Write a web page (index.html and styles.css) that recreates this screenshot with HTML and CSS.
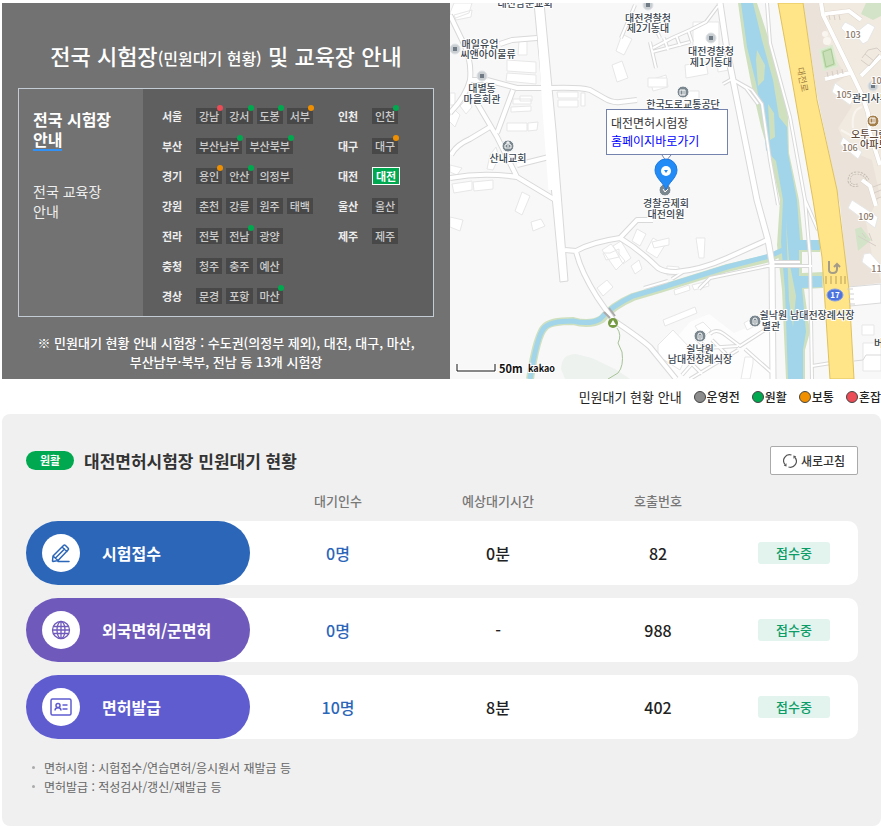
FILE: index.html
```html
<!DOCTYPE html>
<html lang="ko">
<head>
<meta charset="utf-8">
<meta name="viewport" content="width=device-width, initial-scale=1">
<title>전국 시험장 및 교육장 안내</title>
<link rel="stylesheet" href="styles.css">
</head>
<body>
<main class="page">
  <section class="hero">
    <div class="guide">
      <h1 class="guide-title">전국 시험장<small>(민원대기 현황)</small> 및 교육장 안내</h1>
      <div class="guide-box">
        <nav class="tabs">
          <a class="tab tab-on" href="#">전국 시험장<br><span class="underlined">안내</span></a>
          <a class="tab" href="#">전국 교육장<br>안내</a>
        </nav>
        <div class="regions">
          <ul class="region-list">
            <li><b>서울</b><a class="chip busy" href="#">강남</a><a class="chip good" href="#">강서</a><a class="chip good" href="#">도봉</a><a class="chip normal" href="#">서부</a></li>
            <li><b>부산</b><a class="chip good" href="#">부산남부</a><a class="chip good" href="#">부산북부</a></li>
            <li><b>경기</b><a class="chip normal" href="#">용인</a><a class="chip good" href="#">안산</a><a class="chip" href="#">의정부</a></li>
            <li><b>강원</b><a class="chip" href="#">춘천</a><a class="chip" href="#">강릉</a><a class="chip" href="#">원주</a><a class="chip" href="#">태백</a></li>
            <li><b>전라</b><a class="chip" href="#">전북</a><a class="chip good" href="#">전남</a><a class="chip" href="#">광양</a></li>
            <li><b>충청</b><a class="chip" href="#">청주</a><a class="chip" href="#">충주</a><a class="chip" href="#">예산</a></li>
            <li><b>경상</b><a class="chip" href="#">문경</a><a class="chip" href="#">포항</a><a class="chip good" href="#">마산</a></li>
          </ul>
          <ul class="region-list">
            <li><b>인천</b><a class="chip good" href="#">인천</a></li>
            <li><b>대구</b><a class="chip normal" href="#">대구</a></li>
            <li><b>대전</b><a class="chip chip-on" href="#">대전</a></li>
            <li><b>울산</b><a class="chip" href="#">울산</a></li>
            <li><b>제주</b><a class="chip" href="#">제주</a></li>
          </ul>
        </div>
      </div>
      <p class="guide-note">※ 민원대기 현황 안내 시험장 : 수도권(의정부 제외), 대전, 대구, 마산,<br>부산남부·북부, 전남 등 13개 시험장</p>
    </div>

    <div class="map">
      <svg class="map-art" viewBox="450 3 431 376" preserveAspectRatio="xMinYMin slice">
        <defs>
          <g id="roads-s">
            <path d="M487 80 517 88H550Q580 87 590 90L604 98Q612 103 620 102L637 100"/>
            <path d="M450 15 463 42Q472 60 470 80 466 96 450 113"/>
            <path d="M477 103 497 137 517 177 557 201M513 90 497 133M490 127 470 139Q456 145 451 155M450 178Q483 172 517 177M517 165 549 157M500 44 512 40 537 38M470 80H487"/>
            <path d="M565 250 576 251Q592 242 620 238 640 250 658 268 664 272 676 272M576 251Q580 270 597 297L613 320Q640 338 650 347L676 379"/>
            <path d="M620 238 637 220H653M676 272Q700 270 727 258L767 240"/>
          </g>
          <g id="roads-xs">
            <path d="M635 5 621 38M650 42 656 68M653 48 672 38 690 30 706 22 718 6M652 52 690 42M664 38 668 50M676 35 680 46M688 30 692 42M723 84 732 79 746 88 758 104M660 38 650 15"/>
            <path d="M683 272 672 279M699 289 710 278 772 265M644 288 668 281M682 375 706 348 738 346M690 362 702 374M706 348 696 338M710 334Q716 328 724 334L740 346 771 326M712 340 726 354M745 349 771 372M690 379 738 350M812 366 831 363M768 266 812 266"/>
            <path d="M767 3 770 43 790 117 805 200 810 257 812 379M734 80 752 90 762 104 770 160 778 205M805 200 818 230M772 262H800"/>
          </g>
        </defs>
        <rect x="450" y="3" width="431" height="376" fill="#f8f8f8"/>
        <path d="M561 369Q561 354 576 354L592 358 615 369 630 379H565Z" fill="#edf2ef"/>
        <path d="M690 322 709 314 734 333 770 318V379H672L664 352Z" fill="#fdfdfd"/>

        <g class="block">
          <path d="M454 3h18l-3 10-16 6-3-6zM454 15l18-5-1 7-15 3zM519 41h8v14h-9zM507 60l29 2v11l-29-2zM507 73l29 2v9l-30-3zM520 96h12v5h-12zM513 99h18v5h-18zM511 107l20-1v5l-20 1zM507 123h20v8h-20zM528 123l10-1-1 8-9 1zM557 92h21v6h-20zM558 100h20v7h-20zM581 93h4v13h-4z"/>
          <path d="M622 34l10 5-8 16-8-4zM612 65l10-4 6 17-11 4zM650 80l16-5 2 12-15 4zM453 108l7 7-5 12-7-7zM460 106l8-8 4 9-6 7zM490 155l6-8 3 10-6 13-6-1zM450 165l12 3-5 7-7-3zM452 184l20-3v9l-18 3zM473 182l20-2v9l-19 2zM522 192l8 4-8 19-7-4zM531 222l10-3 4 7-12 5zM450 217l13 3-3 11-10-4z"/>
          <path d="M603 253h7l9-4v8l-13 3zM602 250l9-6 14 17-9 9zM613 246l8-5 10 17-8 6zM637 229l9 5-6 12-8-5zM653 238l12 7-8 13-11-7zM631 266l8-6 3 9-7 5zM597 288l10-8 6 7-10 9zM663 320l32-13 2 6-32 13zM658 345l15-15 17 18-10 22-22-14zM695 326l8-4 8 8-8 8zM744 323l10-6 5 7-12 6z"/>
          <path d="M693 22h26v26h-26zM685 65l21-3 2 12-22 4zM717 56h12v14l-11 2zM685 91h14v10h-13zM696 238h9l-1 20h-5zM667 266l12 1v8h-12zM652 242l17-4v7l-15 3zM745 357h8v6l-3 16h-9zM862 325h12v10h-12zM863 343h18v28h-18zM450 93h5v12h-5zM648 78h19v9h-19zM674 290l15-5 1 5-15 5zM692 285l16-4 1 5-15 4z"/>
        </g>

        <path d="M803 3H881V283L848 287 840 205 817 95Z" fill="#ebe3d9"/>
        <path d="M824 3H881V280L872 256 866 222 880 196 872 160 848 150 838 128 852 106 834 84 846 76 828 46Z" fill="#f1eae0"/>
        <path d="M866 3 861 14 873 20 881 16V3Z" fill="#d3e3c7"/>
        <path d="M855 229 861 227 871 240 858 251Z" fill="#d3e3c7"/>
        <path d="M820 50 832 46 837 66 824 70Z" fill="#c8dfb8" stroke="#dcebd2" stroke-width="2"/>
        <path d="M823 52 831 49 834 64 826 67Z" fill="none" stroke="#a9cb95"/>

        <g fill="none" class="lane-case"><path d="M821 3 823 15 850 70 862 95 868 113 870 133 880 165M825 14 849 11 861 20M861 76 881 56M825 79 850 73M862 180 870 186 876 206"/></g>
        <g fill="none" class="lane"><path d="M821 3 823 15 850 70 862 95 868 113 870 133 880 165M825 14 849 11 861 20M861 76 881 56M825 79 850 73M862 180 870 186 876 206"/></g>
        <path d="M827 72 828 77M832 71 833 76M837 70 838 75M842 69 843 74M829 15 830 20M834 15 835 20M839 15 840 20M862 58l6-8 9-2 4 4M861 60 869 66 879 54M865 54l9 7M873 187l8-3M874 193l7-3M876 199l5-2M858 236 876 246M862 233l4 5M869 233l3 8" fill="none" stroke="#d7cfc7"/>
        <circle cx="825" cy="34" r="3" fill="#f9f5ef"/><circle cx="827" cy="41" r="4" fill="#f9f5ef"/>
        <g class="block">
          <path d="M841 28l4-6 8 4 5 5 10-8 7 4-7 14-5 3-5-6-5 2zM835 83l20 14-5 8-18-13zM843 137l19 15-4 7-18-15zM852 200l26 17-3 11-27-20zM864 254l6-1 11 12v8h-5l-14-11z"/>
        </g>
        <path d="M858 185Q851 187 849 181 849 173 857 173 864 173 868 180" fill="none" stroke="#c7bfb7" stroke-width="3" stroke-dasharray="2 1"/>
        <path d="M858 185Q851 187 849 181 849 173 857 173 864 173 868 180" fill="none" stroke="#f3ece2"/>
        <path d="M853 128Q851 110 862 107M841 130 852 136" fill="none" stroke="#f9f4ed" stroke-width="2"/>

        <path class="bank" d="M738 3H757L770 43 782 83 788 117 789 153 799 200 803 240 820 242V252H802V273L823 272V288L804 289 810 332 805 350V379H786L782 290 777 245 780 200 771 161 761 127 751 83 744 47Z"/>
        <path class="bank-line" d="M785 250 770 258 727 268 660 289 633 297Q612 306 602 319 590 326 573 321 550 321 545 327 537 334 530 379"/>
        <path class="water" d="M741 3H753L762 40 773 80 779 117 787 127 788 153 797 200 800 240H820V250H799V276H822V287L802 288 806 332 803 350V379H788L785 290 781 242 783 200 776 161 766 150 764 127 756 83 747 47Z"/>
        <path class="water-line" d="M785 249 770 256 727 267 660 288 633 296Q612 306 600 319 590 325 573 321 550 321 544 328 537 336 530 379"/>
        <path d="M757 50 765 65 764 80 758 86 756 60ZM768 104 774 113 775 137 770 140ZM786 220 789 260 796 296 793 327 789 300Z" fill="#cfe0bf"/>

        <use href="#roads-xs" class="xs-case"/>
        <use href="#roads-s" class="s-case"/>
        <path class="m-case" d="M720 3 727 50 733 80 757 200 768 240 772 263 773 379"/>
        <path d="M534 3 544 110 560 282 568 281 556 130 544 3Z" fill="#fff" stroke="#d9d9d9"/>
        <use href="#roads-xs" class="xs-fill"/>
        <use href="#roads-s" class="s-fill"/>
        <path class="m-fill" d="M720 3 727 50 733 80 757 200 768 240 772 263 773 379"/>
        <path d="M541 30 546 110 552 190" fill="none" stroke="#fff" stroke-width="7"/>

        <path d="M848 287 881 284V303L850 306Z" fill="#fff" stroke="#d9d9d9"/>
        <path d="M854 361 863 360 866 355H881" fill="none" stroke="#d9d9d9"/>
        <path d="M778 3H803L817 100 837 190 843 240 849 290 854 379H830L822 257 813 200 792 80Z" fill="#ffe588" stroke="#dfc25f"/>
        <path d="M826 276v8M831 276v8M836 276v8M841 276v8M845 276v8" stroke="#dcc171" stroke-width="2"/>
        <path d="M847 289h6M848 294h6M848 299h6M849 304h6" stroke="#d0d0d0"/>
        <path d="M829 261v9q0 3 4 3 4 0 4-4v-5m-3 3 3-3 3 3" fill="none" stroke="#a49c87" stroke-width="2"/>
        <path d="M617 328Q622 335 618 343L622 352Q624 366 618 373L608 379" fill="none" stroke="#a7c398"/>
        <path d="M604 312 610 318M609 308 615 316" stroke="#aaa" stroke-width="2"/>

        <g class="dot"><circle cx="455" cy="49" r="5"/><circle cx="482" cy="76" r="5"/><circle cx="648" cy="5" r="5"/><circle cx="711" cy="38" r="5"/><circle cx="873" cy="86" r="5"/></g>
        <path d="M453 47h4v4h-4zM480 74h4v4h-4zM646 3h4v4h-4zM709 36h4v4h-4zM871 84h4v4h-4z" fill="#6f7a84"/>
        <g fill="#7b878f" stroke="#fff" stroke-width="1"><circle cx="508" cy="146" r="6"/><circle cx="683" cy="92" r="6"/><circle cx="665" cy="190" r="6"/><circle cx="755" cy="321" r="6"/><circle cx="700" cy="336" r="6"/></g>
        <path d="M505 148v-3l2-1v-2h2v2l2 1v3zM680 90h5v5h-5zM753 324v-4q0-2 2-2t2 2v4zM698 339v-4q0-2 2-2t2 2v4z" fill="none" stroke="#fff"/>
        <path d="M508 142v5M683 90v5M755 320v3M700 335v3M663 189l2 3 3-3" fill="none" stroke="#fff"/>
        <circle cx="873" cy="121" r="6" fill="#a47f4c" stroke="#fff"/><path d="M870 118h5v5h-5zM873 118v5" fill="none" stroke="#fff"/>
        <circle cx="613" cy="323" r="5" fill="#769a42"/><path d="M613 320 616 325H610Z" fill="#fff"/>

        <g class="place number"><text x="853" y="38">103</text><text x="879" y="84">104</text><text x="844" y="98">105</text><text x="850" y="151">106</text><text x="866" y="220">109</text><text x="879" y="272">110</text></g>
        <g class="place">
          <text x="525" y="7">대전남문교회</text>
          <text><tspan x="648" y="22">대전경찰청</tspan><tspan x="648" y="32">제2기동대</tspan></text>
          <text><tspan x="480" y="48">매일유업</tspan><tspan x="488" y="58">씨앤아이물류</tspan></text>
          <text><tspan x="482" y="92">대별동</tspan><tspan x="482" y="103">마을회관</tspan></text>
          <text><tspan x="711" y="55">대전경찰청</tspan><tspan x="711" y="66">제1기동대</tspan></text>
          <text x="683" y="108">한국도로교통공단</text>
          <text x="508" y="162">산내교회</text>
          <text><tspan x="666" y="207">경찰공제회</tspan><tspan x="666" y="218">대전의원</tspan></text>
          <text><tspan x="807" y="319">쉴낙원 남대전장례식장</tspan><tspan x="771" y="330">별관</tspan></text>
          <text><tspan x="700" y="353">쉴낙원</tspan><tspan x="700" y="363">남대전장례식장</tspan></text>
          <text class="at-left" x="852" y="102">관리사무소</text><text class="at-left" x="874" y="347">버스</text>
        </g>
        <g class="place brown"><text class="at-left"><tspan x="851" y="138">오투그란데</tspan><tspan x="860" y="148">아파트</tspan></text></g>
        <text class="road-name" transform="translate(797 68) rotate(79)">대전로</text>
        <ellipse cx="835" cy="295" rx="8" ry="6" fill="#4d73df" stroke="#87a0e8"/><text class="route" x="835" y="298">17</text>
        <path d="M662 155 666 161 671 155" fill="#fff" stroke="#7383ad"/>
        <path d="M666 190C664 183 655 178 655 170A11 11 0 0 1 677 170C677 178 668 183 666 190Z" fill="#238bf5" stroke="#1c78e0"/>
        <circle cx="666" cy="171" r="5" fill="#fff"/><path d="M664 170h4l-2 3z" fill="#238bf5"/>
        <path d="M457 364V371H495V364" fill="none" stroke="#fff" stroke-width="3"/><path d="M457 364V371H495V364" fill="none" stroke="#111"/>
        <text class="scale" x="499" y="373">50m</text><text class="brand" x="528" y="372">kakao</text>
      </svg>
      <div class="bubble">대전면허시험장<br><a href="#">홈페이지바로가기</a></div>
    </div>
  </section>

  <div class="legend">
    <span class="legend-title">민원대기 현황 안내</span>
    <span class="key"><i class="key-dot idle"></i>운영전</span>
    <span class="key"><i class="key-dot good"></i>원활</span>
    <span class="key"><i class="key-dot normal"></i>보통</span>
    <span class="key"><i class="key-dot busy"></i>혼잡</span>
  </div>

  <section class="status">
    <header class="status-head">
      <span class="pill">원활</span>
      <h2>대전면허시험장 민원대기 현황</h2>
      <button class="refresh" type="button">
        <svg width="14" height="14" viewBox="0 0 14 14" fill="none" stroke="#555" stroke-width="1.2"><path d="M8.500 1A6 6 0 0 0 2 10.500M5.500 13A6 6 0 0 0 12 3.500"/><path d="M0.800 11.800 3.500 12.500 3.500 9.300ZM13.200 2.200 10.400 1.500 10.500 4.700Z" fill="#555" stroke="none"/></svg>
        새로고침
      </button>
    </header>
    <table class="queue">
      <thead>
        <tr><th class="col-name"></th><th class="col-num">대기인수</th><th class="col-num">예상대기시간</th><th class="col-num">호출번호</th><th></th></tr>
      </thead>
      <tbody>
        <tr>
          <th scope="row"><div class="service blue"><span class="disc"><svg width="20" height="20" viewBox="0 0 20 20" fill="none" stroke="#2c66b8" stroke-width="1.500" stroke-linejoin="round" stroke-linecap="round"><path d="M2 13 12.500 2.500Q13.500 1.500 14.500 2.500L17 5Q18 6 17 7L7 17.500 2 18.500 1.500 18ZM11 4 16 8.500M2 13 7 17.500M4.500 15 13.500 6M7 18.500H18"/></svg></span>시험접수</div></th>
          <td class="waiting">0명</td><td>0분</td><td>82</td><td class="state"><span class="badge">접수중</span></td>
        </tr>
        <tr>
          <th scope="row"><div class="service purple"><span class="disc"><svg width="20" height="20" viewBox="0 0 20 20" fill="none" stroke="#6f5abb" stroke-width="1.300"><circle cx="10" cy="10" r="8.500"/><ellipse cx="10" cy="10" rx="4" ry="8.500"/><path d="M10 1.500V18.500M2.500 6.500H17.500M2.500 13.500H17.500M1.500 10H18.500"/></svg></span>외국면허/군면허</div></th>
          <td class="waiting">0명</td><td>-</td><td>988</td><td class="state"><span class="badge">접수중</span></td>
        </tr>
        <tr>
          <th scope="row"><div class="service violet"><span class="disc"><svg width="22" height="18" viewBox="0 0 22 18" fill="none" stroke="#5f5ccf" stroke-width="1.500"><rect x="1" y="1" width="20" height="16" rx="1.500"/><circle cx="8" cy="7.500" r="2"/><path d="M5 12.500Q5 9.800 8 9.800T11 12.500M12.500 7H17.500M12.500 11H17.500"/></svg></span>면허발급</div></th>
          <td class="waiting">10명</td><td>8분</td><td>402</td><td class="state"><span class="badge">접수중</span></td>
        </tr>
      </tbody>
    </table>
    <ul class="notes">
      <li>면허시험 : 시험접수/연습면허/응시원서 재발급 등</li>
      <li>면허발급 : 적성검사/갱신/재발급 등</li>
    </ul>
  </section>
</main>
</body>
</html>
```
FILE: styles.css
```css
* { box-sizing: border-box; }
body { margin: 0; background: #fff; color: #333; font-family: "Noto Sans CJK KR", sans-serif; font-size: 12px; }
h1, h2, p, ul { margin: 0; padding: 0; }
ul { list-style: none; }
a { color: inherit; text-decoration: none; }
.page { padding: 3px 0 0 2px; overflow: hidden; }

.hero { display: grid; grid-template-columns: 448px 1fr; }
.guide { padding: 36px 16px 8px; background: #727272; color: #fff; }
.guide-title { margin-bottom: 14px; font-size: 22px; font-weight: 500; line-height: 32px; text-align: center; white-space: nowrap; }
.guide-title small { font-size: 16px; }
.guide-box { display: grid; grid-template-columns: 124px 1fr; border: 1px solid #c3ccd5; }
.tabs { display: flex; flex-direction: column; gap: 30px; padding: 20px 14px; }
.tab { font-size: 14px; line-height: 20px; color: #eee; }
.tab-on { font-size: 16px; font-weight: 700; color: #fff; }
.underlined { display: inline-block; border-bottom: 2px solid #3191f5; line-height: 20px; }
.regions { display: grid; grid-template-columns: 176px 1fr; padding: 12px 0 5px 19px; background: #5f5f5f; }
.region-list li { display: flex; align-items: center; gap: 4px; height: 30px; }
.region-list b { width: 30px; font-size: 11px; font-weight: 700; line-height: 16px; color: #eee; }
.chip { position: relative; padding: 0 3px; background: #484848; color: #ccc; font-size: 11px; font-weight: 500; line-height: 16px; white-space: nowrap; }
.chip-on { border: 1px solid #fff; background: #00a94f; color: #fff; font-weight: 700; }
.chip.good::after, .chip.normal::after, .chip.busy::after { content: ""; position: absolute; top: -3px; right: -1px; width: 6px; height: 6px; border-radius: 50%; }
.good::after, .key-dot.good { background: #00a94f; }
.normal::after, .key-dot.normal { background: #f09000; }
.busy::after, .key-dot.busy { background: #ec4c56; }
.key-dot.idle { background: #8c8c8c; }
.guide-note { margin-top: 16px; font-size: 13px; font-weight: 500; line-height: 19px; text-align: center; white-space: nowrap; }

.map { position: relative; overflow: hidden; background: #f8f8f8; }
.map-art { position: absolute; inset: 0; width: 100%; height: 100%; }
.block { fill: #fff; stroke: #e7e7e7; }
.bank { fill: #cfe0bf; }
.bank-line, .water-line { fill: none; stroke: #cfe0bf; stroke-width: 8; }
.water { fill: #a2d5e9; }
.water-line { stroke: #a2d5e9; stroke-width: 5; }
.xs-case, .s-case, .m-case { fill: none; stroke: #d9d9d9; stroke-linejoin: round; }
.xs-fill, .s-fill, .m-fill { fill: none; stroke: #fff; stroke-linejoin: round; }
.xs-case { stroke-width: 4; }
.xs-fill { stroke-width: 2; }
.s-case { stroke-width: 6; }
.s-fill { stroke-width: 4; }
.m-case { stroke-width: 7; }
.m-fill { stroke-width: 5; }
.lane-case { stroke: #ddd5cc; stroke-width: 5; }
.lane { stroke: #fff; stroke-width: 4; }
.dot { fill: #c9ced2; stroke: #dfe2e5; }
.place { fill: #39434d; stroke: #fff; stroke-width: 2; stroke-linejoin: round; paint-order: stroke; font-size: 10px; font-weight: 500; text-anchor: middle; }
.at-left { text-anchor: start; }
.brown { fill: #5b4636; }
.number { fill: #8b7767; font-size: 9px; }
.road-name { fill: #9c7b3e; font-size: 9px; }
.route { fill: #fff; font-size: 8px; font-weight: 700; text-anchor: middle; }
.scale, .brand { fill: #111; stroke: #fff; stroke-width: 2; paint-order: stroke; font-size: 11px; font-weight: 700; }
.brand { font-size: 9px; }
.bubble { position: absolute; top: 106px; left: 156px; width: 122px; padding: 4px; border: 1px solid #7383ad; background: #fff; line-height: 18px; }
.bubble a { color: #00f; }

.legend { display: flex; justify-content: flex-end; align-items: center; gap: 12px; height: 35px; color: #222; font-weight: 500; white-space: nowrap; }
.legend-title { font-size: 13px; font-weight: 400; }
.key { display: flex; align-items: center; gap: 1px; }
.key-dot { width: 12px; height: 12px; border: 1px solid #444; border-radius: 50%; }

.status { padding: 32px 23px 30px 24px; border-radius: 8px; background: #f0f0f0; }
.status-head { display: flex; align-items: center; gap: 10px; }
.pill { width: 48px; border-radius: 10px; background: #00a94f; color: #fff; font-size: 11px; font-weight: 700; line-height: 19px; text-align: center; }
.status-head h2 { font-size: 17px; font-weight: 700; line-height: 28px; }
.refresh { display: flex; align-items: center; justify-content: center; gap: 4px; width: 88px; height: 29px; margin-left: auto; padding: 0; border: 1px solid #aaa; border-radius: 2px; background: #fff; color: #333; font: 500 12px/18px "Noto Sans CJK KR", sans-serif; }
.queue { width: 100%; table-layout: fixed; border-spacing: 0 13px; text-align: center; }
.queue th, .queue td { padding: 0; }
.queue thead th { height: 20px; padding-top: 6px; color: #777; font-size: 13px; font-weight: 500; line-height: 14px; }
.col-name { width: 232px; }
.col-num { width: 160px; }
.queue tbody th, .queue tbody td { height: 64px; background: #fff; }
.queue tbody th { border-radius: 32px 0 0 32px; }
.queue tbody td { font-size: 16px; font-weight: 500; line-height: 24px; color: #222; }
.queue tbody td.waiting { color: #2c66b8; }
.queue tbody td.state { padding-right: 8px; border-radius: 0 10px 10px 0; }
.service { display: flex; align-items: center; gap: 22px; width: 224px; height: 64px; padding-left: 16px; border-radius: 32px; color: #fff; font-size: 16px; font-weight: 700; }
.blue { background: #2c66b8; }
.purple { background: #6f5abb; }
.violet { background: #5f5ccf; }
.disc { display: flex; align-items: center; justify-content: center; width: 38px; height: 38px; border-radius: 50%; background: #fff; }
.badge { display: block; width: 72px; margin: 0 auto; border-radius: 3px; background: #e3f4ee; color: #0c9c68; font-size: 13px; line-height: 22px; }
.notes { margin-top: 6px; padding-left: 6px; color: #666; line-height: 19px; }
.notes li { display: flex; align-items: center; gap: 9px; }
.notes li::before { content: ""; width: 3px; height: 3px; border-radius: 50%; background: #aaa; }
```
